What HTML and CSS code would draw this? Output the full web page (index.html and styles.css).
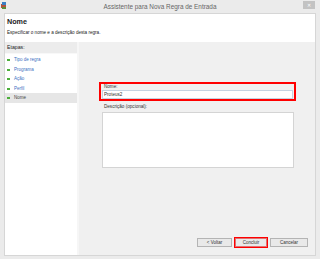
FILE: index.html
```html
<!DOCTYPE html>
<html lang="pt">
<head>
    <meta charset="UTF-8">
    <title>Assistente para Nova Regra de Entrada</title>
    <link rel="stylesheet" href="styles.css">
</head>
<body>
    <div class="window">
        <div class="titlebar">
            <svg class="app-icon" width="6" height="7" viewBox="0 0 6 7">
                <rect x="0" y="2" width="5" height="4" fill="#b0533c"/>
                <rect x="1" y="0" width="4" height="3" fill="#3a7fc4"/>
                <rect x="1" y="5" width="4" height="2" fill="#5a8c3a"/>
            </svg>
            <div class="title">Assistente para Nova Regra de Entrada</div>
            <div class="close">&#x2715;</div>
        </div>
        <div class="frame">
            <div class="header">
                <h1>Nome</h1>
                <p>Especificar o nome e a descrição desta regra.</p>
            </div>
            <div class="content">
                <div class="sidebar">
                    <div class="steps-title">Etapas:</div>
                    <ul class="steps">
                        <li>Tipo de regra</li>
                        <li>Programa</li>
                        <li>Ação</li>
                        <li>Perfil</li>
                        <li class="current">Nome</li>
                    </ul>
                </div>
                <div class="main">
                    <div class="form-group highlight">
                        <label for="ruleName">Nome:</label>
                        <input type="text" id="ruleName" value="Proteus2">
                    </div>
                    <div class="form-group">
                        <label for="ruleDesc">Descrição (opcional):</label>
                        <textarea id="ruleDesc"></textarea>
                    </div>
                    <div class="buttons">
                        <button class="btn">&lt; Voltar</button>
                        <button class="btn btn-focus">Concluir</button>
                        <button class="btn">Cancelar</button>
                    </div>
                </div>
            </div>
        </div>
    </div>
</body>
</html>
```

FILE: styles.css
```css
body {
    margin: 0;
    font-family: "Liberation Sans", Arial, sans-serif;
    background-color: #ebebeb;
    color: #333;
}
.window {
    width: 320px;
    height: 259px;
    display: flex;
    flex-direction: column;
    overflow: hidden;
}
.titlebar {
    height: 13px;
    display: grid;
    grid-template-columns: 1fr auto 1fr;
    align-items: start;
}
.app-icon {
    margin: 2px 0 0 1px;
}
.title {
    font-size: 6.4px;
    color: #666;
    line-height: 13px;
}
.close {
    justify-self: end;
    width: 12px;
    height: 8px;
    margin: 1px 5px 0 0;
    background: #c3c3c3;
    color: #fff;
    font-size: 5px;
    line-height: 8px;
    text-align: center;
}
.frame {
    margin: 0 4px;
    height: 241px;
    border: 1px solid #d6d6d6;
    display: flex;
    flex-direction: column;
}
.header {
    background: #fff;
    height: 28px;
    padding: 0 2px;
    box-sizing: border-box;
}
.header h1 {
    margin: 0;
    padding-top: 3px;
    font-size: 7.2px;
    line-height: 10px;
    color: #222;
}
.header p {
    margin: 3px 0 0;
    font-size: 4.6px;
    line-height: 6px;
    color: #222;
}
.content {
    flex: 1;
    display: flex;
    background: #f0f0f0;
}
.sidebar {
    width: 72px;
    display: flex;
    flex-direction: column;
    border-right: 2px solid #f6f6f6;
}
.steps-title {
    height: 11px;
    padding: 0 2px;
    font-size: 5.2px;
    line-height: 10px;
    color: #222;
    background: #ececec;
    border-bottom: 1px solid #f8f8f8;
}
.steps {
    flex: 1;
    margin: 0;
    padding: 1px 0 0;
    list-style: none;
    background: #fff;
}
.steps li {
    height: 9.6px;
    line-height: 9.6px;
    padding-left: 9px;
    font-size: 4.5px;
    color: #3c6fc2;
    position: relative;
}
.steps li::before {
    content: "";
    position: absolute;
    left: 2px;
    top: 4px;
    width: 3px;
    height: 2px;
    background: #4caf3a;
}
.steps li.current {
    background: #e6e6e6;
    color: #444;
}
.main {
    flex: 1;
    display: flex;
    flex-direction: column;
    padding: 40px 7px 8px 20px;
}
.form-group {
    margin-right: 13px;
    display: flex;
    flex-direction: column;
}
.form-group label {
    font-size: 4.6px;
    line-height: 6px;
    padding-left: 2px;
    color: #333;
}
.highlight {
    border: 2px solid #f00;
    padding: 0 1px;
    margin-right: 12px;
}
.form-group input {
    height: 9px;
    box-sizing: border-box;
    border: 1px solid #c5d3e2;
    padding: 0 1px;
    font-family: inherit;
    font-size: 4.6px;
    color: #333;
    outline: none;
}
.form-group + .form-group {
    margin-top: 3px;
    padding: 0 1px 0 3px;
}
.form-group textarea {
    height: 56px;
    box-sizing: border-box;
    border: 1px solid #d4d4d4;
    resize: none;
    background: #fff;
    margin-top: 2px;
}
.buttons {
    margin-top: auto;
    display: flex;
    justify-content: flex-end;
    gap: 3px;
}
.btn {
    height: 9px;
    padding: 0;
    width: 35px;
    border: 1px solid #b4b4b4;
    background: #e9e9e9;
    font-family: inherit;
    font-size: 4.5px;
    color: #333;
}
.btn:nth-child(3) {
    width: 38px;
}
.btn-focus {
    width: 32px;
    outline: 1px solid #f00;
    outline-offset: 0;
    border-color: #e07070;
}
```
